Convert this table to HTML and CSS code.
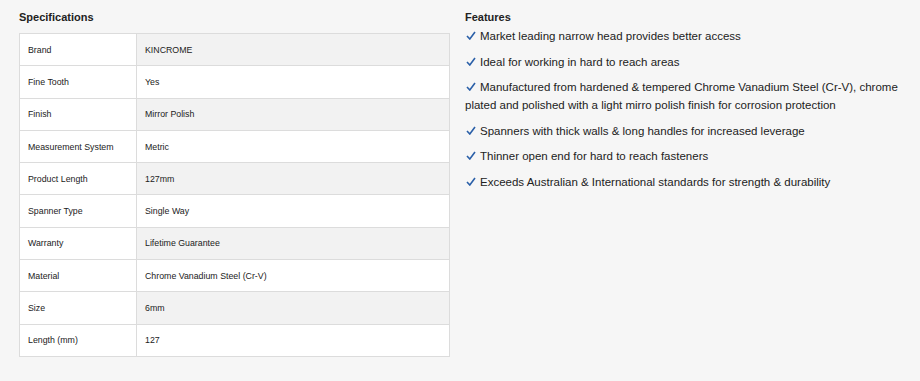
FILE: index.html
```html
<!DOCTYPE html>
<html lang="en">
<head>
  <meta charset="UTF-8">
  <title>Specifications</title>
  <link rel="stylesheet" href="styles.css">
</head>
<body>
  <div class="product-info">
    <div class="specs">
      <h3 class="specs-title">Specifications</h3>
      <table class="specs-table">
        <tr><td class="label">Brand</td><td class="value">KINCROME</td></tr>
        <tr><td class="label">Fine Tooth</td><td class="value">Yes</td></tr>
        <tr><td class="label">Finish</td><td class="value">Mirror Polish</td></tr>
        <tr><td class="label">Measurement System</td><td class="value">Metric</td></tr>
        <tr><td class="label">Product Length</td><td class="value">127mm</td></tr>
        <tr><td class="label">Spanner Type</td><td class="value">Single Way</td></tr>
        <tr><td class="label">Warranty</td><td class="value">Lifetime Guarantee</td></tr>
        <tr><td class="label">Material</td><td class="value">Chrome Vanadium Steel (Cr-V)</td></tr>
        <tr><td class="label">Size</td><td class="value">6mm</td></tr>
        <tr><td class="label">Length (mm)</td><td class="value">127</td></tr>
      </table>
    </div>
    <div class="features">
      <h3 class="features-title">Features</h3>
      <ul class="features-list">
        <li><svg class="tick" viewBox="0 0 10 9" width="10" height="9"><path d="M1 5l2.8 3L9 1"/></svg>Market leading narrow head provides better access</li>
        <li><svg class="tick" viewBox="0 0 10 9" width="10" height="9"><path d="M1 5l2.8 3L9 1"/></svg>Ideal for working in hard to reach areas</li>
        <li><svg class="tick" viewBox="0 0 10 9" width="10" height="9"><path d="M1 5l2.8 3L9 1"/></svg>Manufactured from hardened &amp; tempered Chrome Vanadium Steel (Cr-V), chrome plated and polished with a light mirro polish finish for corrosion protection</li>
        <li><svg class="tick" viewBox="0 0 10 9" width="10" height="9"><path d="M1 5l2.8 3L9 1"/></svg>Spanners with thick walls &amp; long handles for increased leverage</li>
        <li><svg class="tick" viewBox="0 0 10 9" width="10" height="9"><path d="M1 5l2.8 3L9 1"/></svg>Thinner open end for hard to reach fasteners</li>
        <li><svg class="tick" viewBox="0 0 10 9" width="10" height="9"><path d="M1 5l2.8 3L9 1"/></svg>Exceeds Australian &amp; International standards for strength &amp; durability</li>
      </ul>
    </div>
  </div>
</body>
</html>
```

FILE: styles.css
```css
*{
  margin: 0;
  padding: 0;
  box-sizing: border-box;
}
body{
  font-family: "Liberation Sans", Arial, sans-serif;
  background-color: #f6f6f6;
  color: #222;
  height: 381px;
}
.product-info{
  display: flex;
  gap: 15px;
  padding: 10px 0 0 19px;
}
.specs{
  width: 431px;
}
.specs-title{
  font-size: 11px;
  font-weight: bold;
  line-height: 14px;
  margin-bottom: 9px;
}
.specs-table{
  width: 100%;
  border-collapse: collapse;
  font-size: 8.8px;
}
.specs-table td{
  border: 1px solid #dcdcdc;
  height: 32.3px;
  padding: 0 8px;
  background-color: #fff;
}
.specs-table .label{
  width: 117px;
}
.specs-table tr:nth-child(odd) .value{
  background-color: #f2f2f2;
}
.features{
  flex: 1;
  padding-right: 20px;
}
.features-title{
  font-size: 11px;
  font-weight: bold;
  line-height: 14px;
  margin-bottom: 3px;
}
.features-list{
  list-style: none;
  font-size: 11.5px;
  line-height: 18px;
}
.features-list li{
  margin-bottom: 7.5px;
}
.tick{
  fill: none;
  stroke: #2a5fa8;
  stroke-width: 1.6;
  margin: 0 4px 0 1px;
  vertical-align: 0;
}
```
